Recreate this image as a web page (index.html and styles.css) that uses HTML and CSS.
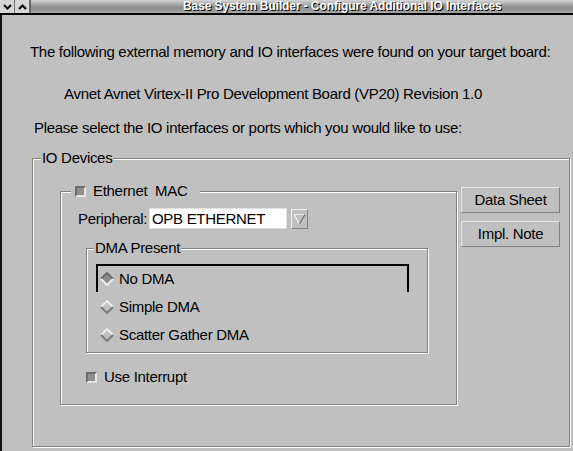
FILE: index.html
```html
<!DOCTYPE html>
<html>
<head>
<meta charset="utf-8">
<link rel="stylesheet" href="styles.css">
</head>
<body>
<div class="titlebar">
  <div class="tb-btn"><svg width="9" height="6" viewBox="0 0 9 6"><path d="M1 1 L4.5 4.5 L8 1" fill="none" stroke="#000" stroke-width="2"/></svg></div>
  <div class="tb-btn"><svg width="9" height="6" viewBox="0 0 9 6"><path d="M1 5 L4.5 1.5 L8 5" fill="none" stroke="#000" stroke-width="2"/></svg></div>
  <div class="tb-title">Base System Builder - Configure Additional IO Interfaces</div>
</div>
<div class="window">
  <p class="intro">The following external memory and IO interfaces were found on your target board:</p>
  <p class="board">Avnet Avnet Virtex-II Pro Development Board (VP20) Revision 1.0</p>
  <p class="prompt">Please select the IO interfaces or ports which you would like to use:</p>
  <fieldset class="group io">
    <legend class="io-legend">IO Devices</legend>
    <div class="io-body">
      <fieldset class="group eth">
        <legend class="eth-legend"><span class="check"></span><span>Ethernet&nbsp; MAC</span></legend>
        <div class="eth-body">
          <div class="periph">
            <span class="periph-label">Peripheral:</span>
            <span class="periph-input">OPB ETHERNET</span>
            <span class="drop-btn"><svg width="13" height="12" viewBox="0 0 13 12"><path d="M1 1.5 L12 1.5" stroke="#e8e8e8" stroke-width="1"/><path d="M1 1.5 L6.5 11" stroke="#f0f0f0" stroke-width="1.2" fill="none"/><path d="M12 1.5 L6.5 11" stroke="#707070" stroke-width="1.2" fill="none"/></svg></span>
          </div>
          <fieldset class="group dma">
            <legend class="dma-legend">DMA Present</legend>
            <div class="dma-body">
              <div class="radio-row focused">
                <svg class="diamond" width="14" height="14" viewBox="0 0 14 14"><polygon points="7,1 13,7 7,13 1,7" fill="#8c8c8c"/><polyline points="1,7 7,1 13,7" fill="none" stroke="#6a6a6a" stroke-width="2"/><polyline points="1,7 7,13 13,7" fill="none" stroke="#ececec" stroke-width="2"/></svg>
                <span>No DMA</span>
              </div>
              <div class="radio-row">
                <svg class="diamond" width="14" height="14" viewBox="0 0 14 14"><polyline points="1,7 7,1 13,7" fill="none" stroke="#ececec" stroke-width="2"/><polyline points="1,7 7,13 13,7" fill="none" stroke="#7a7a7a" stroke-width="2"/></svg>
                <span>Simple DMA</span>
              </div>
              <div class="radio-row">
                <svg class="diamond" width="14" height="14" viewBox="0 0 14 14"><polyline points="1,7 7,1 13,7" fill="none" stroke="#ececec" stroke-width="2"/><polyline points="1,7 7,13 13,7" fill="none" stroke="#7a7a7a" stroke-width="2"/></svg>
                <span>Scatter Gather DMA</span>
              </div>
            </div>
          </fieldset>
          <div class="check-row"><span class="check"></span><span>Use Interrupt</span></div>
        </div>
      </fieldset>
      <div class="side-buttons">
        <button class="btn">Data Sheet</button>
        <button class="btn">Impl. Note</button>
      </div>
    </div>
  </fieldset>
</div>
</body>
</html>
```
FILE: styles.css
```css
html, body {
  margin: 0;
  padding: 0;
}
body {
  width: 573px;
  height: 451px;
  overflow: hidden;
  background: #c0c0c0;
  font-family: "Liberation Sans", Arial, sans-serif;
  font-size: 15px;
  letter-spacing: -0.3px;
  line-height: 16px;
  color: #000;
}
.titlebar {
  display: flex;
  height: 13px;
  border-bottom: 2px solid #000;
  background: linear-gradient(#d4d4d4, #9a9a9a 45%, #8c8c8c 60%, #a8a8a8);
}
.tb-btn {
  width: 14px;
  height: 13px;
  background: #d6d6d6;
  border-right: 1px solid #707070;
  display: flex;
  align-items: center;
  justify-content: center;
}
.tb-title {
  padding-left: 152px;
  font-size: 12px;
  font-weight: bold;
  letter-spacing: -0.1px;
  line-height: 13px;
  color: #fff;
  text-shadow: 1px 1px 0 #000;
  white-space: nowrap;
  border-left: 1px solid #606060;
}
.window {
  height: 436px;
  border-left: 2px solid #111;
  box-sizing: border-box;
  overflow: hidden;
  padding-top: 29px;
}
.intro {
  margin: 0 0 26px 28px;
}
.board {
  margin: 0 0 18px 62px;
}
.prompt {
  margin: 0 0 14px 32px;
}
.group {
  margin: 0;
  padding: 0;
  min-width: 0;
  border: 1px solid #808080;
  box-shadow: inset 1px 1px 0 #fff, 1px 1px 0 #fff;
}
.group > legend {
  padding: 0 1px;
  line-height: 16px;
  background: #c0c0c0;
}
.io {
  margin-left: 30px;
  width: 538px;
  box-sizing: border-box;
}
.io-legend {
  margin-left: 8px;
}
.io-body {
  display: flex;
  align-items: flex-start;
  gap: 4px;
  padding: 17px 9px 41px 27px;
}
.eth {
  width: 397px;
  box-sizing: border-box;
}
.eth-legend.eth-legend {
  display: flex;
  align-items: center;
  margin-left: 10px;
  padding: 0 13px 0 4px;
}
.eth-body {
  padding: 9px 0 19px 17px;
}
.check {
  display: inline-block;
  width: 11px;
  height: 11px;
  box-sizing: border-box;
  border: 2px solid;
  border-color: #6c6c6c #e4e4e4 #e4e4e4 #6c6c6c;
  background: #8e8e8e;
  margin-right: 7px;
  flex: none;
}
.periph {
  display: flex;
  align-items: center;
  height: 21px;
}
.periph-label {
  width: 71px;
}
.periph-input {
  width: 138px;
  height: 21px;
  box-sizing: border-box;
  background: #fff;
  border: 1px solid #e0e0e0;
  padding-left: 2px;
  line-height: 19px;
}
.drop-btn {
  margin-left: 4px;
  width: 17px;
  height: 20px;
  box-sizing: border-box;
  border: 1px solid;
  border-color: #eeeeee #808080 #808080 #eeeeee;
  display: flex;
  align-items: center;
  justify-content: center;
}
.dma {
  width: 342px;
  box-sizing: border-box;
  margin: 11px 0 0 8px;
}
.dma-legend.dma-legend {
  margin-left: 7px;
}
.dma-body {
  padding: 8px 18px 4px 9px;
}
.radio-row {
  display: flex;
  align-items: center;
  gap: 5px;
  height: 28px;
  box-sizing: border-box;
  border: 2px solid transparent;
  border-bottom: 0;
  padding-left: 2px;
}
.radio-row.focused {
  border-color: #000;
}
.diamond {
  flex: none;
}
.check-row {
  display: flex;
  align-items: center;
  margin: 16px 0 0 8px;
}
.side-buttons {
  display: flex;
  flex-direction: column;
  gap: 8px;
  margin-top: 4px;
}
.btn {
  width: 99px;
  height: 26px;
  box-sizing: border-box;
  margin: 0;
  padding: 0;
  font: inherit;
  letter-spacing: inherit;
  color: #000;
  background: #c0c0c0;
  border: 1px solid;
  border-color: #e8e8e8 #808080 #808080 #e8e8e8;
}
```
